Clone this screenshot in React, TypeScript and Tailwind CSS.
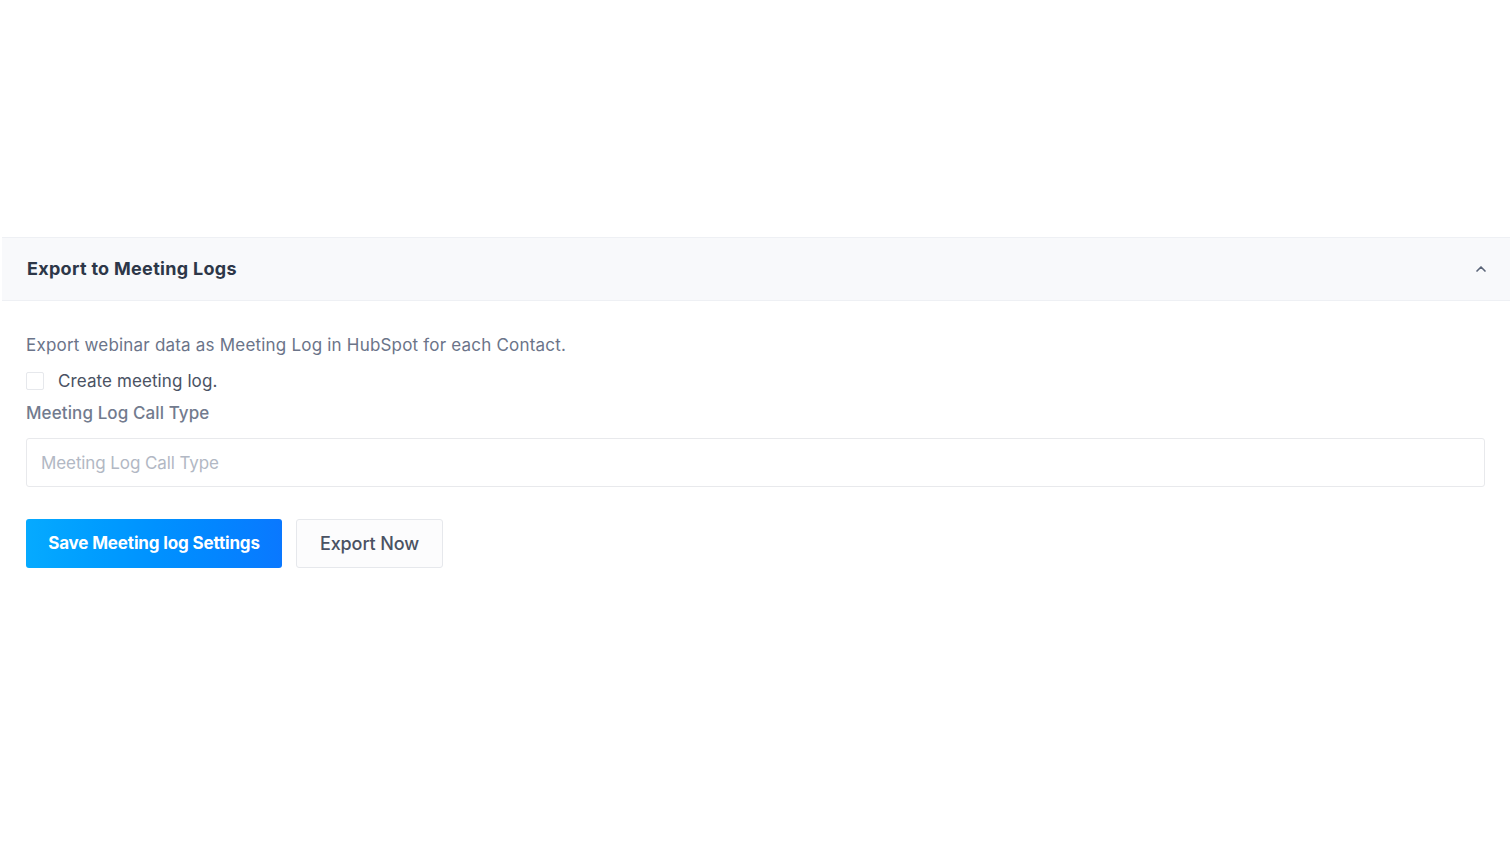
import { ChevronUp } from "lucide-react";

export default function App() {
  return (
    <div
      className="w-[1510px] h-[849px] bg-white overflow-hidden"
      style={{ fontFamily: "Inter, 'Noto Sans', sans-serif" }}
    >
      <div className="pt-[237px] pl-[2px]">
        {/* Accordion header */}
        <div className="h-[64px] bg-[#f8f9fb] border-t border-b border-[#eef0f4] flex items-center justify-between pl-[25px] pr-[21px]">
          <h2 className="text-[18px] font-bold text-[#2d3748] tracking-[0.3px] -mt-[2px]">Export to Meeting Logs</h2>
          <ChevronUp className="w-[16px] h-[16px] text-[#5a6478]" strokeWidth={2.5} />
        </div>

        {/* Body */}
        <div className="pl-[24px] pr-[25px] pt-[31px]">
          <p className="text-[17px] text-[#6b7489] leading-[26px] tracking-[0.2px]">
            Export webinar data as Meeting Log in HubSpot for each Contact.
          </p>
          <label className="flex items-center gap-[14px] mt-[12px]">
            <span className="w-[18px] h-[18px] border border-[#e6e8ec] rounded-[2px] bg-white" />
            <span className="text-[17px] text-[#4a5263] leading-[22px] tracking-[0.1px]">Create meeting log.</span>
          </label>
          <div className="mt-[10px] text-[17px] font-medium text-[#727b8e] leading-[22px] tracking-[0.1px]">
            Meeting Log Call Type
          </div>
          <input
            type="text"
            placeholder="Meeting Log Call Type"
            className="mt-[14px] w-full h-[49px] border border-[#e8e9ec] rounded-[3px] px-[14px] text-[17px] text-[#4a5263] placeholder:text-[#b2b8c4] outline-none tracking-[-0.1px]"
          />
          <div className="flex gap-[14px] mt-[32px]">
            <button className="h-[49px] w-[256px] rounded-[3px] bg-gradient-to-r from-[#06aaff] to-[#0a78ff] text-white text-[17px] font-bold tracking-[-0.15px]">
              Save Meeting log Settings
            </button>
            <button className="h-[49px] w-[147px] rounded-[3px] border border-[#e6e8ec] bg-[#fcfcfd] text-[#4a5263] text-[18px] font-medium tracking-[-0.1px]">
              Export Now
            </button>
          </div>
        </div>
      </div>
    </div>
  );
}
